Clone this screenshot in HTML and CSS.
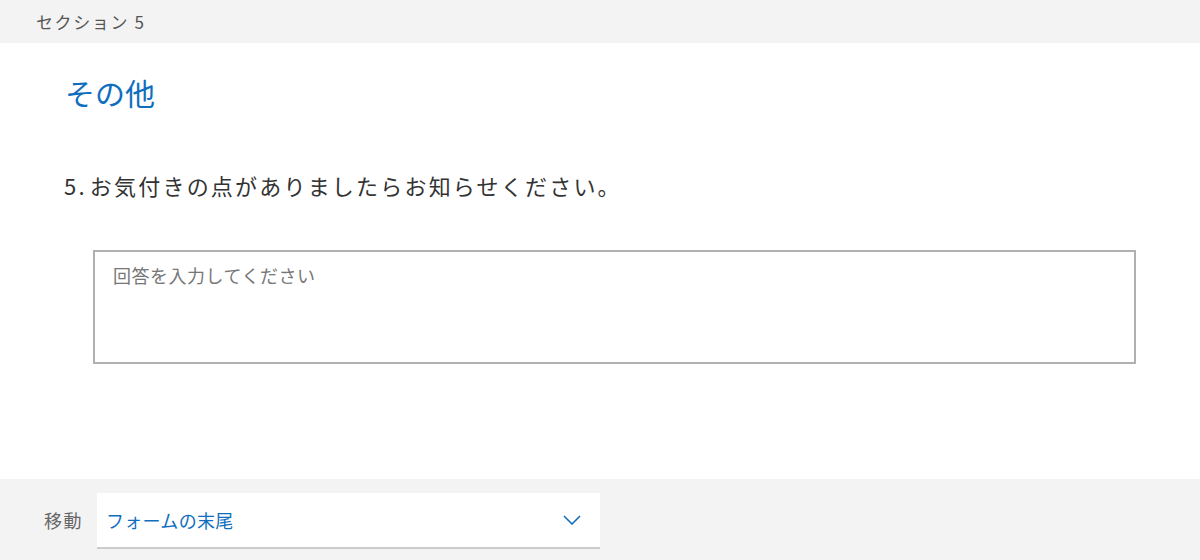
FILE: index.html
```html
<!DOCTYPE html>
<html lang="ja">
<head>
    <meta charset="UTF-8">
    <meta name="viewport" content="width=device-width, initial-scale=1.0">
    <title>セクション 5</title>
    <link rel="stylesheet" href="styles.css">
</head>
<body>
    <!-- セクション見出し -->
    <div class="section-bar">セクション 5</div>

    <div class="content">
        <h1 class="section-title">その他</h1>
        <p class="question">5. お気付きの点がありましたらお知らせください。</p>
        <textarea class="answer" placeholder="回答を入力してください"></textarea>
    </div>

    <!-- 移動先 -->
    <div class="footer">
        <span class="move-label">移動</span>
        <div class="move-select">
            <span class="move-value">フォームの末尾</span>
            <svg class="chevron" width="18" height="10" viewBox="0 0 18 10">
                <path d="M1 1 L9 9 L17 1" fill="none" stroke="#106ebe" stroke-width="1.6"/>
            </svg>
        </div>
    </div>
</body>
</html>
```

FILE: styles.css
```css
body {
    margin: 0;
    padding: 0;
    background: #fff;
    font-family: "Noto Sans CJK JP", "Noto Sans", sans-serif;
    color: #333;
}
.section-bar {
    height: 43px;
    display: flex;
    align-items: center;
    padding-left: 36px;
    background: #f3f3f3;
    color: #555;
    font-size: 17px;
    letter-spacing: 1.6px;
}
.content {
    padding: 29px 0 115px 64px;
}
.section-title {
    margin: 0 0 0 1px;
    font-size: 30px;
    line-height: 40px;
    font-weight: normal;
    color: #106ebe;
}
.question {
    margin: 57px 0 49px 0;
    font-size: 22px;
    line-height: 32px;
    letter-spacing: 2.2px;
    word-spacing: -4px;
    color: #333;
}
.answer {
    display: block;
    box-sizing: border-box;
    width: 1043px;
    height: 114px;
    margin-left: 29px;
    padding: 11px 18px;
    border: 2px solid #b0b0b0;
    font-family: inherit;
    font-size: 18px;
    line-height: 24px;
    letter-spacing: 0.5px;
    color: #333;
    resize: none;
    outline: none;
}
.answer::placeholder {
    color: #777;
}
.footer {
    height: 81px;
    box-sizing: border-box;
    display: flex;
    align-items: flex-start;
    padding: 14px 0 0 44px;
    background: #f3f3f3;
}
.move-label {
    width: 53px;
    line-height: 54px;
    font-size: 18px;
    letter-spacing: 1.5px;
    color: #666;
}
.move-select {
    box-sizing: border-box;
    width: 503px;
    height: 56px;
    display: flex;
    align-items: center;
    justify-content: space-between;
    padding: 0 19px 0 9px;
    background: #fff;
    border-bottom: 2px solid #ccc;
}
.move-value {
    font-size: 18px;
    letter-spacing: 0.3px;
    color: #106ebe;
}
.chevron {
    display: block;
}
```
